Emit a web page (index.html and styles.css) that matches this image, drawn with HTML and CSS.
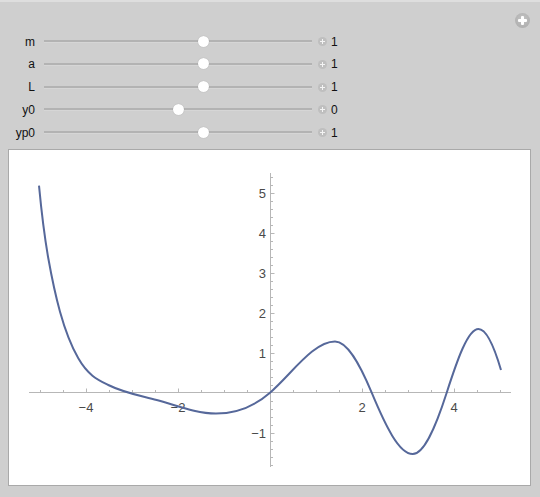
FILE: index.html
```html
<!DOCTYPE html>
<html lang="en">
<head>
    <meta charset="UTF-8">
    <title>Manipulate</title>
    <link rel="stylesheet" href="styles.css">
</head>
<body>
    <div class="panel">
        <div class="add-button"><span></span></div>

        <div class="controls">
            <div class="control">
                <span class="name">m</span>
                <div class="track"><div class="thumb" style="left: 59.7%"></div></div>
                <span class="mini-add"></span>
                <span class="value">1</span>
            </div>
            <div class="control">
                <span class="name">a</span>
                <div class="track"><div class="thumb" style="left: 59.7%"></div></div>
                <span class="mini-add"></span>
                <span class="value">1</span>
            </div>
            <div class="control">
                <span class="name">L</span>
                <div class="track"><div class="thumb" style="left: 59.7%"></div></div>
                <span class="mini-add"></span>
                <span class="value">1</span>
            </div>
            <div class="control">
                <span class="name">y0</span>
                <div class="track"><div class="thumb" style="left: 50.3%"></div></div>
                <span class="mini-add"></span>
                <span class="value">0</span>
            </div>
            <div class="control">
                <span class="name">yp0</span>
                <div class="track"><div class="thumb" style="left: 59.7%"></div></div>
                <span class="mini-add"></span>
                <span class="value">1</span>
            </div>
        </div>

        <div class="plot">
            <svg id="graph" width="521" height="335" viewBox="9 150 521 335"></svg>
        </div>
    </div>

    <script>
        const NS = 'http://www.w3.org/2000/svg';
        const svg = document.getElementById('graph');

        // plot scale (page pixels)
        const x0 = 270, y0 = 392.5, sx = 46, sy = 40;
        const px = x => x0 + x * sx;
        const py = y => y0 - y * sy;

        function add(tag, attrs, text) {
            const el = document.createElementNS(NS, tag);
            for (const k in attrs) el.setAttribute(k, attrs[k]);
            if (text) el.textContent = text;
            svg.appendChild(el);
            return el;
        }

        const label = v => v < 0 ? '\u2212' + Math.abs(v) : String(v);

        // axes
        add('line', { x1: 29, y1: y0, x2: 511, y2: y0, class: 'axis' });
        add('line', { x1: x0 + 0.5, y1: 173, x2: x0 + 0.5, y2: 467, class: 'axis' });

        // x ticks
        for (let i = -10; i <= 10; i++) {
            if (i === 0) continue;
            const x = Math.round(px(i / 2)) + 0.5;
            const major = i % 4 === 0;
            add('line', { x1: x, y1: y0, x2: x, y2: y0 - (major ? 4 : 2.5), class: 'axis' });
            if (major) {
                add('text', { x: x - 0.5, y: 412, class: 'tick-label', 'text-anchor': 'middle' }, label(i / 2));
            }
        }

        // y ticks
        for (let i = -9; i <= 27; i++) {
            if (i === 0) continue;
            const y = Math.round(py(i / 5)) + 0.5;
            const major = i % 5 === 0;
            add('line', { x1: x0 + 0.5, y1: y, x2: x0 + (major ? 4.5 : 3), y2: y, class: 'axis' });
            if (major) {
                add('text', { x: 266, y: y + 4.5, class: 'tick-label', 'text-anchor': 'end' }, label(i / 5));
            }
        }

        // solution curve: [x, y, slope] knots read off the NDSolve plot, joined as Hermite cubics
        const knots = [
            [39, 185.7, 10.5], [48.3, 258.3, 5.6], [60, 311.7, 3.6], [78.3, 358.3, 1.75],
            [108.3, 385, 0.5], [156.7, 400, 0.27], [216, 413.5, 0], [270, 392.7, -0.87],
            [335, 341.5, 0], [371.7, 392.7, 2.4], [412.7, 454, 0], [446.7, 392.7, -3.1],
            [478.5, 329, 0], [501, 370, 3.4]
        ];

        let d = `M${knots[0][0]},${knots[0][1]}`;
        for (let i = 0; i < knots.length - 1; i++) {
            const [xa, ya, ma] = knots[i];
            const [xb, yb, mb] = knots[i + 1];
            const h = (xb - xa) / 3;
            d += ` C${(xa + h).toFixed(2)},${(ya + ma * h).toFixed(2)}`
               + ` ${(xb - h).toFixed(2)},${(yb - mb * h).toFixed(2)} ${xb},${yb}`;
        }
        add('path', { d: d, class: 'curve' });
    </script>
</body>
</html>
```

FILE: styles.css
```css
body {
    margin: 0;
    font-family: 'Liberation Sans', Arial, sans-serif;
    background: #cfcfcf;
}

.panel {
    position: relative;
    box-sizing: border-box;
    width: 540px;
    min-height: 497px;
    background: #cfcfcf;
    border-top: 2px solid #dedede;
}

.add-button {
    position: absolute;
    top: 11px;
    right: 10px;
    width: 15px;
    height: 15px;
    border-radius: 50%;
    background: radial-gradient(circle at 50% 40%, #c4c4c4, #a9a9a9);
}

.add-button span::before,
.add-button span::after {
    content: '';
    position: absolute;
    background: #ffffff;
    border-radius: 1px;
}

.add-button span::before {
    left: 3px;
    top: 6px;
    width: 9px;
    height: 3px;
}

.add-button span::after {
    left: 6px;
    top: 3px;
    width: 3px;
    height: 9px;
}

.controls {
    padding-top: 28.3px;
    display: grid;
    grid-auto-rows: 22.75px;
}

.control {
    display: flex;
    align-items: center;
    font-size: 12px;
    color: #111111;
}

.name {
    width: 35px;
    text-align: right;
}

.track {
    position: relative;
    width: 268px;
    height: 2px;
    margin-left: 9px;
    background: #b3b3b3;
    border-bottom: 1px solid #d6d6d6;
}

.thumb {
    position: absolute;
    top: -4.5px;
    width: 11px;
    height: 11px;
    margin-left: -5.5px;
    border-radius: 50%;
    background: #ffffff;
    box-shadow: 0 0 1px rgba(0, 0, 0, 0.25);
}

.mini-add {
    position: relative;
    width: 9px;
    height: 9px;
    margin-left: 5.5px;
    border-radius: 50%;
    background: #bfbfbf;
}

.mini-add::before,
.mini-add::after {
    content: '';
    position: absolute;
    background: #f4f4f4;
}

.mini-add::before {
    left: 2px;
    top: 4px;
    width: 5px;
    height: 1px;
}

.mini-add::after {
    left: 4px;
    top: 2px;
    width: 1px;
    height: 5px;
}

.value {
    margin-left: 4.5px;
}

.plot {
    box-sizing: border-box;
    width: 523px;
    height: 337px;
    margin: 5px 0 0 8px;
    background: #ffffff;
    border: 1px solid #a9a9a9;
}

.plot svg {
    display: block;
}

.axis {
    stroke: #b7b7b7;
    stroke-width: 1;
}

.tick-label {
    font-family: 'Liberation Sans', Arial, sans-serif;
    font-size: 13px;
    fill: #4a4a4a;
}

.curve {
    fill: none;
    stroke: #56689a;
    stroke-width: 2;
    stroke-linejoin: round;
}
```
